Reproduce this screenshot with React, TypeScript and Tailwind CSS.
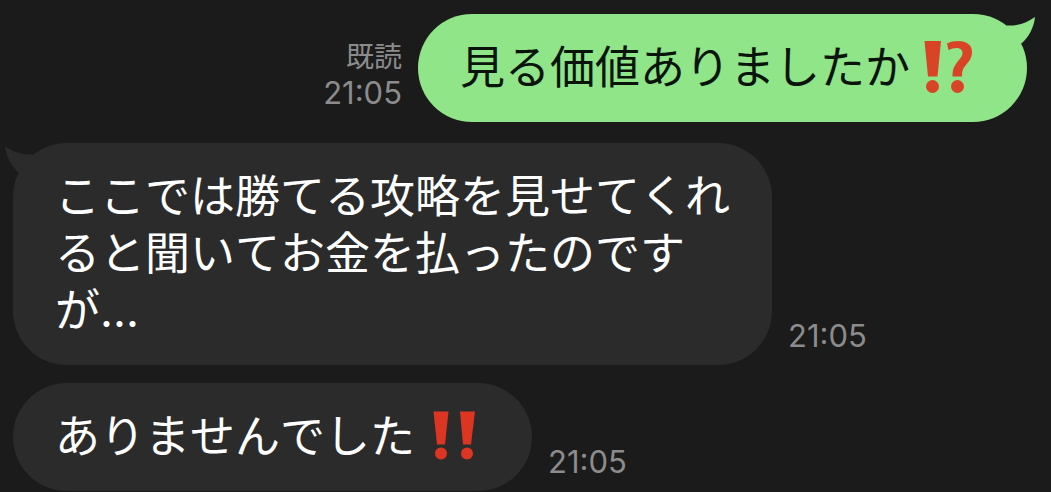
import type { ReactNode } from 'react';
import { clsx } from 'clsx';

interface Message {
  id: number;
  from: 'me' | 'friend';
  text: string;
  emoji?: 'interrobang' | 'double';
  time: string;
  read?: boolean;
  // First message of a run from the same sender
  tail?: boolean;
}

const messages: Message[] = [
  {
    id: 1,
    from: 'me',
    text: '見る価値ありましたか',
    emoji: 'interrobang',
    time: '21:05',
    read: true,
    tail: true,
  },
  {
    id: 2,
    from: 'friend',
    text: 'ここでは勝てる攻略を見せてくれると聞いてお金を払ったのですが...',
    time: '21:05',
    tail: true,
  },
  {
    id: 3,
    from: 'friend',
    text: 'ありませんでした',
    emoji: 'double',
    time: '21:05',
  },
];

function InterrobangEmoji() {
  return (
    <svg
      role="img"
      aria-label="⁉️"
      viewBox="0 0 75 57"
      className="inline-block h-[57px] w-[75px] align-top text-[#d94426]"
      fill="currentColor"
    >
      <path d="M14.5 2H31L27.5 37.5H18Z" />
      <circle cx="22.5" cy="47.5" r="6.5" />
      <path d="M37 4.5C40 2.8 44 2 48 2C57 2 62 6 62 13C62 19 59 22.5 55.5 26.5C52.5 30 52 33 52 37.5H42.5C42.5 31 43.5 28 47 23.5C50 19.5 52.5 17.5 52.5 14C52.5 10.5 50 9 46.5 9C44 9 41.5 9.7 38.5 11Z" />
      <circle cx="47.5" cy="47.5" r="6.5" />
    </svg>
  );
}

function DoubleExclamationEmoji() {
  return (
    <svg
      role="img"
      aria-label="‼️"
      viewBox="0 0 75 57"
      className="inline-block h-[57px] w-[75px] align-top text-[#dc3622]"
      fill="currentColor"
    >
      <path d="M18.5 3.5H33.5L30 36.5H22Z" />
      <circle cx="26" cy="45.5" r="6" />
      <path d="M45 3.5H60L56 36.5H48Z" />
      <circle cx="52" cy="45.5" r="6" />
    </svg>
  );
}

function Bubble({ message, children }: { message: Message; children: ReactNode }) {
  const mine = message.from === 'me';

  return (
    <div
      className={clsx(
        'relative max-w-[759px] rounded-[54px] px-[42px] pt-[25px] pb-[26px] text-[45px] leading-[57px] [font-kerning:none]',
        mine ? 'bg-[#8fe587] text-[#0b140b]' : 'bg-[#2b2b2b] text-white'
      )}
    >
      {message.tail && (
        <svg
          aria-hidden="true"
          viewBox="0 0 36 36"
          className={clsx(
            'absolute top-0 h-9 w-9',
            mine ? '-right-2 text-[#8fe587]' : '-left-2 -scale-x-100 text-[#2b2b2b]'
          )}
          fill="currentColor"
        >
          <path d="M8 11.5C18 12 28 9 36 3C35 13 30 23 23 29L14 34L2 20Z" />
        </svg>
      )}
      <p className="relative">{children}</p>
    </div>
  );
}

function MessageRow({ message }: { message: Message }) {
  const mine = message.from === 'me';

  return (
    <li
      className={clsx(
        'flex items-end gap-4 first:mt-0',
        message.tail ? 'mt-[21px]' : 'mt-[18px]',
        mine && 'flex-row-reverse'
      )}
    >
      <Bubble message={message}>
        {message.text}
        {message.emoji === 'interrobang' && <InterrobangEmoji />}
        {message.emoji === 'double' && <DoubleExclamationEmoji />}
      </Bubble>
      <div
        className={clsx(
          'shrink-0 pb-[11px] leading-9 text-[#8c8c8c]',
          mine && 'text-right'
        )}
      >
        {message.read && <div className="text-[28px]">既読</div>}
        <time className="block text-[31px]">{message.time}</time>
      </div>
    </li>
  );
}

export default function App() {
  return (
    <main className="min-h-screen bg-[#1b1b1b] pt-3.5 pr-6 pb-px pl-[13px] font-['Inter','Noto_Sans_CJK_JP',sans-serif]">
      <ul lang="ja">
        {messages.map((message) => (
          <MessageRow key={message.id} message={message} />
        ))}
      </ul>
    </main>
  );
}
